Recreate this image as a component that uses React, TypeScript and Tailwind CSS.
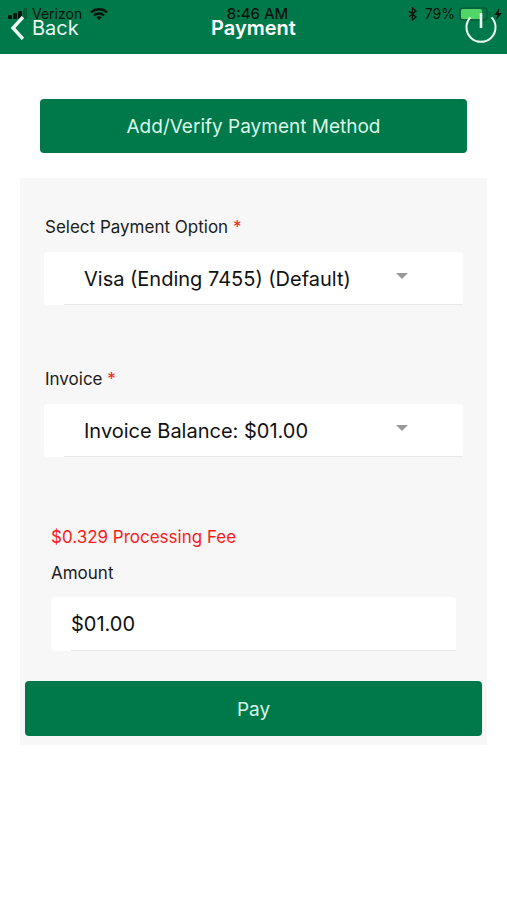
import type { ReactNode } from "react";

function StatusBar() {
  return (
    <div className="pointer-events-none absolute inset-x-0 top-0 grid h-7 grid-cols-[1fr_auto_1fr] items-center pl-2 text-[14px] leading-5 text-[#06140d]">
      <div className="flex items-center gap-1">
        <svg className="h-3 w-5 shrink-0" viewBox="0 0 20 12" fill="currentColor" aria-hidden="true">
          <rect x="0" y="7" width="4" height="4" rx="1" />
          <rect x="5" y="5" width="4" height="6" rx="1" />
          <rect x="10" y="3" width="4" height="8" rx="1" />
          <rect x="15" y="0" width="4" height="11" rx="1" opacity="0.3" />
        </svg>
        <span>Verizon</span>
        <svg className="ml-1 h-3 w-[18px] shrink-0" viewBox="0 0 18 12" fill="none" stroke="currentColor" strokeWidth="2.4" aria-hidden="true">
          <path d="M1 4.4C5.5 0.2 12.5 0.2 17 4.4" />
          <path d="M4 7.4C6.8 4.8 11.2 4.8 14 7.4" />
          <path d="M6.3 9.3C7.8 8 10.2 8 11.7 9.3L9 12Z" fill="currentColor" stroke="none" />
        </svg>
      </div>
      <div className="text-center text-[15px] font-medium">8:46 AM</div>
      <div className="flex items-center justify-end">
        <svg className="mr-2 h-[14px] w-[9px] shrink-0" viewBox="0 0 9 14" fill="none" stroke="currentColor" strokeWidth="1.4" aria-hidden="true">
          <path d="M1 4L8 10L4.5 13V1L8 4L1 10" />
        </svg>
        <span className="mr-1">79%</span>
        <svg className="h-[14px] w-12 shrink-0" viewBox="0 0 48 14" aria-hidden="true">
          <rect x="1" y="1" width="27" height="12" rx="3" fill="none" stroke="#075c37" strokeWidth="1.6" />
          <path d="M30 5C32 5.5 32 8.5 30 9Z" fill="#075c37" />
          <rect x="2" y="2" width="21" height="10" rx="2" fill="#52d567" />
          <path d="M40.5 1L35 8H38.5L37 13L43 6H39.5Z" fill="currentColor" />
        </svg>
      </div>
    </div>
  );
}

function Header() {
  return (
    <header className="relative h-[54px] bg-[#00794a]">
      <StatusBar />
      <div className="relative grid h-full grid-cols-3 items-center px-2 pt-0.5 text-xl leading-6 text-white">
        <button type="button" className="flex items-center gap-2 justify-self-start text-[#eafaf2]">
          <svg className="ml-0.5 h-6 w-[14px]" viewBox="0 0 14 24" fill="none" stroke="currentColor" strokeWidth="3.4" aria-hidden="true">
            <path d="M13 1L3 12L13 23" />
          </svg>
          Back
        </button>
        <h1 className="text-center font-semibold">Payment</h1>
        <button type="button" aria-label="Log out" className="justify-self-end text-[#eafaf2]">
          <svg className="mr-0.5 h-8 w-8" viewBox="0 0 32 32" fill="none" stroke="currentColor" strokeWidth="2" aria-hidden="true">
            <path d="M5.4 5.4A14.5 14.5 0 1 0 26.6 5.4" />
            <path d="M16 1V16" strokeWidth="2.6" />
          </svg>
        </button>
      </div>
    </header>
  );
}

function Field({ children }: { children: ReactNode }) {
  return (
    <div className="relative rounded-sm bg-white">
      {children}
      <div className="ml-5 h-px bg-[#e8e8e8]" />
    </div>
  );
}

function SelectField({ id, label, option }: { id: string; label: string; option: string }) {
  return (
    <div className="flex flex-col gap-[13px]">
      <label htmlFor={id} className="px-px text-[17px] leading-6">
        {label} <span className="text-[#ff1a1a]">*</span>
      </label>
      <Field>
        <select id={id} className="block h-[52px] w-full appearance-none bg-transparent px-10 pt-0.5 text-xl text-[#111111]">
          <option>{option}</option>
        </select>
        <svg className="pointer-events-none absolute top-5 right-[55px] h-2 w-3" viewBox="0 0 12 8" aria-hidden="true">
          <path d="M0 1H12L6 7Z" fill="#999999" />
        </svg>
      </Field>
    </div>
  );
}

export default function App() {
  return (
    <div className="min-h-screen bg-white font-['Inter','Liberation_Sans',sans-serif] text-[#1c1c1c]">
      <Header />
      <main className="px-5 pt-[45px]">
        <div className="px-5">
          <button type="button" className="h-[54px] w-full rounded bg-[#00794a] pt-0.5 text-[19px] leading-6 text-[#d9f7e8]">
            Add/Verify Payment Method
          </button>
        </div>
        <form className="mt-[25px] bg-[#f7f7f7] px-1 pt-[37px] pb-[9px]" onSubmit={(event) => event.preventDefault()}>
          <div className="flex flex-col gap-[62px] px-5">
            <SelectField id="payment-option" label="Select Payment Option" option="Visa (Ending 7455) (Default)" />
            <SelectField id="invoice" label="Invoice" option="Invoice Balance: $01.00" />
          </div>
          <div className="mt-[68px] flex flex-col gap-3 px-[27px] text-[17px] leading-6">
            <p className="text-[#ff1a1a]">$0.329 Processing Fee</p>
            <label htmlFor="amount">Amount</label>
            <Field>
              <input id="amount" type="text" defaultValue="$01.00" className="block h-[53px] w-full bg-transparent px-5 text-xl text-[#111111]" />
            </Field>
          </div>
          <div className="mt-[30px] px-px">
            <button type="submit" className="h-[55px] w-full rounded bg-[#00794a] pt-0.5 text-[19px] leading-6 text-[#d9f7e8]">
              Pay
            </button>
          </div>
        </form>
      </main>
    </div>
  );
}
